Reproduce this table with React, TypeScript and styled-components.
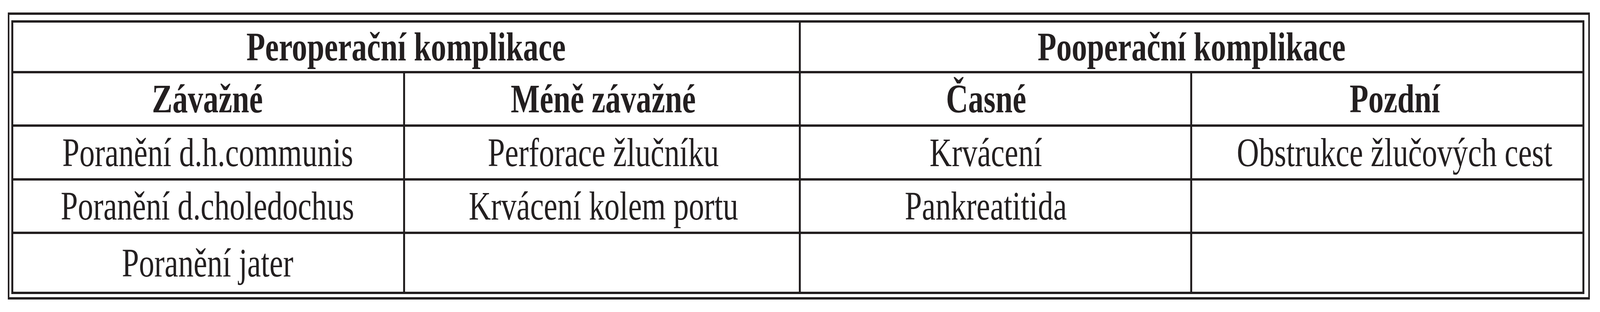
import React from 'react'
import styled, { createGlobalStyle } from 'styled-components'

const ink = '#231f20'

// the layout is measured on a 5366x800 page; the real window may be narrower,
// so horizontal sizes follow the viewport width and vertical ones stay in px
const REF_WIDTH = 5366
const u = (px: number) => `calc(${px} * 100vw / ${REF_WIDTH})`

// text centre of each column sits a little off the cell centre in the scan
const columnShift = [-2, 5, -32, 25]

const groups = ['Peroperační komplikace', 'Pooperační komplikace']

const subHeads = ['Závažné', 'Méně závažné', 'Časné', 'Pozdní']

const rows: string[][] = [
  [
    'Poranění d.h.communis',
    'Perforace žlučníku',
    'Krvácení',
    'Obstrukce žlučových cest'
  ],
  ['Poranění d.choledochus', 'Krvácení kolem portu', 'Pankreatitida', ''],
  ['Poranění jater', '', '', '']
]

export default function App() {
  const squeeze = Math.min(1, window.innerWidth / REF_WIDTH)
  const label = (text: string) =>
    text ? <Label style={{ transform: `scaleX(${squeeze})` }}>{text}</Label> : null

  return (
    <>
      <GlobalStyle />
      <Frame>
        <Grid>
          {groups.map((g) => (
            <GroupCell key={g}>{label(g)}</GroupCell>
          ))}
          {subHeads.map((h, i) => (
            <Cell key={h} $bold $shift={columnShift[i]}>
              {label(h)}
            </Cell>
          ))}
          {rows.map((row, r) =>
            row.map((text, c) => (
              <Cell key={`${r}-${c}`} $shift={columnShift[c]}>
                {label(text)}
              </Cell>
            ))
          )}
        </Grid>
      </Frame>
    </>
  )
}

const GlobalStyle = createGlobalStyle`
  html, body {
    margin: 0;
    padding: 0;
    background: #ffffff;
    overflow: hidden;
  }
  body {
    font-family: "Liberation Serif", "Times New Roman", serif;
    color: ${ink};
  }
`

const Frame = styled.div`
  width: fit-content;
  margin: 32px 0 0 ${u(26)};
  border-style: solid;
  border-color: ${ink};
  border-width: 6px ${u(6)};
  padding: 14px ${u(13)} 8px ${u(7)};
  background: #ffffff;
`

const Grid = styled.div`
  display: grid;
  grid-template-columns: ${u(1308)} ${u(1321)} ${u(1307)} ${u(1309)};
  grid-template-rows: 124px 131px 132px 131px 148px;
  row-gap: 6px;
  column-gap: ${u(6)};
  padding: 6px ${u(6)};
  background: ${ink};
`

const Cell = styled.div<{ $bold?: boolean; $shift?: number }>`
  display: flex;
  align-items: center;
  justify-content: center;
  min-width: 0;
  background: #ffffff;
  font-size: 103px;
  line-height: 1;
  font-weight: ${(p) => (p.$bold ? 700 : 400)};
  white-space: nowrap;
  padding-left: ${(p) => u(Math.max(0, (p.$shift ?? 0) * 2))};
  padding-right: ${(p) => u(Math.max(0, -(p.$shift ?? 0) * 2))};
`

const GroupCell = styled(Cell).attrs({ $bold: true })`
  grid-column: span 2;
`

const Label = styled.span`
  flex: none;
  transform-origin: center;
`
